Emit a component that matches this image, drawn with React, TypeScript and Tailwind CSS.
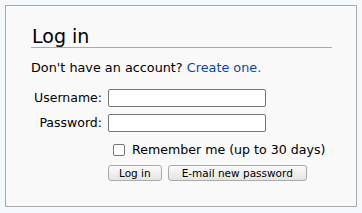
import React, { useState } from 'react';

const font = { fontFamily: '"DejaVu Sans", Verdana, sans-serif' };

export default function App() {
  const [remember, setRemember] = useState(false);

  return (
    <div className="w-[362px] h-[213px] bg-[#f6f9fc] pt-[5px] px-[5px] text-black" style={font}>
      <div className="h-[202px] border border-[#aaaaaa] bg-[#f9f9f9] pt-[19px] pl-[25px] pr-[24px]">
        {/* Heading */}
        <h2 className="text-[19px] leading-[22px] border-b border-[#aaaaaa] pl-px">Log in</h2>

        <p className="mt-[11px] text-[12.8px] leading-[18px]">
          Don't have an account?{' '}
          <a href="#" className="text-[#0645ad]">Create one.</a>
        </p>

        {/* Fields */}
        <div className="mt-[12px] flex flex-col gap-[7px] text-[12.5px]">
          <div className="flex items-center h-[18px]">
            <label className="w-[71px] text-right">Username:</label>
            <input
              type="text"
              className="ml-[6px] w-[158px] h-[18px] bg-white border border-[#767676] rounded-[2px] outline-none px-1"
            />
          </div>
          <div className="flex items-center h-[18px]">
            <label className="w-[71px] text-right">Password:</label>
            <input
              type="password"
              className="ml-[6px] w-[158px] h-[18px] bg-white border border-[#767676] rounded-[2px] outline-none px-1"
            />
          </div>
        </div>

        {/* Remember me */}
        <label className="mt-[10px] ml-[82px] flex items-center gap-[7px] text-[12.6px] h-[16px] cursor-pointer">
          <span
            onClick={() => setRemember(!remember)}
            className="w-[12px] h-[12px] bg-white border border-[#767676] rounded-[2px] flex items-center justify-center text-[9px]"
          >
            {remember ? '✓' : ''}
          </span>
          <span>Remember me (up to 30 days)</span>
        </label>

        {/* Buttons */}
        <div className="mt-[7px] ml-[77px] flex gap-[6px]">
          <button className="h-[16px] px-[10px] text-[10.5px] leading-none border border-[#aaaaaa] rounded-[3px] bg-gradient-to-b from-[#fbfbfb] to-[#e4e4e4]">
            Log in
          </button>
          <button className="h-[16px] px-[13px] text-[10.5px] leading-none border border-[#aaaaaa] rounded-[3px] bg-gradient-to-b from-[#fbfbfb] to-[#e4e4e4]">
            E-mail new password
          </button>
        </div>
      </div>
    </div>
  );
}
